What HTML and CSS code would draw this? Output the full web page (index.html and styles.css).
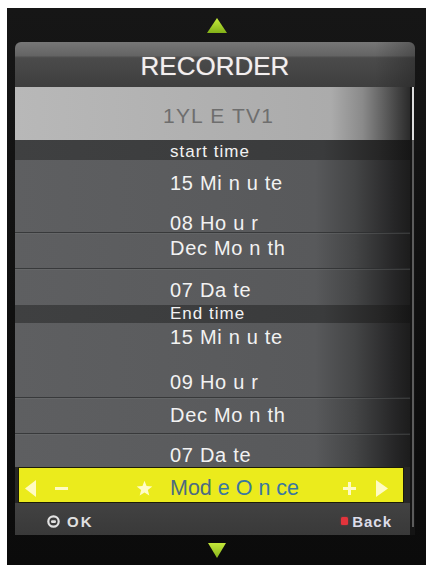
FILE: index.html
```html
<!DOCTYPE html>
<html>
<head>
<meta charset="utf-8">
<title>Recorder</title>
<link rel="stylesheet" href="styles.css">
</head>
<body>
<div class="screen">
  <div class="nav nav-up">
    <svg width="20" height="15" viewBox="0 0 20 15"><defs><linearGradient id="gu" x1="0" y1="0" x2="0" y2="1"><stop offset="0" stop-color="#c8ee3c"/><stop offset="1" stop-color="#82b018"/></linearGradient></defs><polygon points="10,0 20,15 0,15" fill="url(#gu)"/></svg>
  </div>
  <div class="panel">
    <div class="header">RECORDER</div>
    <div class="main">
      <div class="col">
        <div class="row channel">1YL E TV1</div>
        <div class="band band-start">start time</div>
        <div class="row r-min1">15 Mi n u te</div>
        <div class="row r-hour1">08 Ho u r</div>
        <div class="row sep r-month1">Dec Mo n th</div>
        <div class="row sep r-date1">07 Da te</div>
        <div class="band band-end">End time</div>
        <div class="row r-min2">15 Mi n u te</div>
        <div class="row r-hour2">09 Ho u r</div>
        <div class="row sep r-month2">Dec Mo n th</div>
        <div class="row sep r-date2">07 Da te</div>
        <div class="mode-wrap">
          <div class="mode">
            <svg class="m-left" width="11" height="17" viewBox="0 0 11 17"><polygon points="11,0 11,17 0,8.5" fill="#fffbc2"/></svg>
            <svg class="m-minus" width="13" height="3" viewBox="0 0 13 3"><rect width="13" height="3" fill="#fffbc2"/></svg>
            <svg class="m-star" width="17" height="17" viewBox="0 0 24 24"><polygon points="12,1 14.9,8.6 23,9 16.7,14.1 18.8,22 12,17.5 5.2,22 7.3,14.1 1,9 9.1,8.6" fill="#fffcc8"/></svg>
            <span class="m-text"><span class="m-a">Mod</span> <span class="m-b">e O n ce</span></span>
            <svg class="m-plus" width="13" height="13" viewBox="0 0 13 13"><rect x="5" y="0" width="3" height="13" fill="#fffbc2"/><rect x="0" y="5" width="13" height="3" fill="#fffbc2"/></svg>
            <svg class="m-right" width="12" height="17" viewBox="0 0 12 17"><polygon points="0,0 12,8.5 0,17" fill="#fffbc2"/></svg>
          </div>
        </div>
        <div class="footer">
          <span class="f-ok">
            <svg width="13" height="13" viewBox="0 0 13 13"><circle cx="6.5" cy="6.5" r="5.2" fill="none" stroke="#e2e2e2" stroke-width="2.2"/><rect x="4" y="5.3" width="5" height="2.6" rx="1.2" fill="#e2e2e2"/></svg>
            <span class="f-label">OK</span>
          </span>
          <span class="f-back">
            <span class="red-key"></span>
            <span class="f-label back">Back</span>
          </span>
        </div>
      </div>
      <div class="scroll"><div class="track"></div></div>
    </div>
  </div>
  <div class="nav nav-down">
    <svg width="18" height="15" viewBox="0 0 18 15"><defs><linearGradient id="gd" x1="0" y1="0" x2="0" y2="1"><stop offset="0" stop-color="#c4e83a"/><stop offset="1" stop-color="#88b41c"/></linearGradient></defs><polygon points="0,0 18,0 9,15" fill="url(#gd)"/></svg>
  </div>
</div>
</body>
</html>
```

FILE: styles.css
```css
html, body {
  margin: 0;
  background: #ffffff;
}

body {
  font-family: "Liberation Sans", Arial, sans-serif;
}

.screen {
  margin: 8px 0 0 7px;
  width: 419px;
  height: 557px;
  box-sizing: border-box;
  padding-left: 8px;
  background: linear-gradient(to bottom, #161616, #0b0b0b);
  overflow: hidden;
}

.nav {
  width: 400px;
  box-sizing: border-box;
  padding-left: 4px;
  display: flex;
  justify-content: center;
}

.nav svg {
  display: block;
}

.nav-up {
  height: 34px;
  padding-top: 10px;
}

.nav-down {
  padding-top: 8px;
}

.panel {
  width: 400px;
}

.header {
  height: 45px;
  box-sizing: border-box;
  padding-top: 11px;
  text-align: center;
  font-size: 26px;
  line-height: 1;
  color: #f3efef;
  text-shadow: 0 0 1px rgba(255, 255, 255, 0.5);
  border-radius: 6px 6px 0 0;
  background:
    linear-gradient(to right, rgba(0,0,0,0) 90%, rgba(0,0,0,0.25) 100%),
    linear-gradient(to bottom, #777777 0%, #646464 30%, #4b4b4b 35%, #3e3e3e 100%);
}

.main {
  display: flex;
}

.col {
  width: 395px;
}

.scroll {
  width: 5px;
  background: #141414;
  display: flex;
  justify-content: center;
}

.track {
  width: 2px;
  background: linear-gradient(to bottom, #dcdcdc 0, #dcdcdc 53px, #5c5c5c 53px, #5c5c5c 440px, #141414 440px);
}

.row {
  box-sizing: border-box;
  padding-left: 155px;
  font-size: 20px;
  line-height: 1;
  letter-spacing: 0.7px;
  color: #f2f2f2;
  white-space: pre;
  background: linear-gradient(to right, #5e5f61 0%, #58595b 76%, #444546 86%, #262627 96%, #1c1c1c 100%);
}

.row.sep {
  border-top: 1px solid rgba(44, 45, 47, 0.75);
  box-shadow: inset 0 1px 0 rgba(120, 121, 123, 0.3);
}

.channel {
  height: 53px;
  padding: 18px 0 0 148px;
  font-size: 21px;
  letter-spacing: 1.2px;
  color: #6e6e6e;
  background: linear-gradient(to right, #b8b8b8 0%, #ababab 80%, #8a8a8a 88%, #4a4a4a 96%, #2a2a2a 100%);
}

.band {
  box-sizing: border-box;
  padding-left: 155px;
  font-size: 17px;
  line-height: 1;
  letter-spacing: 1px;
  color: #f2f2f2;
  background: linear-gradient(to right, #3f4041 0%, #3a3b3c 78%, #262626 92%, #161616 100%);
}

.band-start {
  height: 20px;
  padding-top: 3px;
}

.band-end {
  height: 18px;
  padding-top: 0;
}

.r-min1 { height: 36px; padding-top: 13px; }
.r-hour1 { height: 36px; padding-top: 17px; }
.r-month1 { height: 36px; padding-top: 5px; }
.r-date1 { height: 37px; padding-top: 11px; }
.r-min2 { height: 37px; padding-top: 4px; }
.r-hour2 { height: 37px; padding-top: 12px; }
.r-month2 { height: 36px; padding-top: 7px; }
.r-date2 { height: 34px; padding-top: 11px; }

.mode-wrap {
  height: 36px;
  box-sizing: border-box;
  padding: 0 6px 0 3px;
  background: #262626;
}

.mode {
  height: 36px;
  box-sizing: border-box;
  border: 1px solid #1c1c08;
  padding: 7px 15px 0 0;
  background: #ebeb1c;
  display: flex;
  align-items: center;
}

.mode svg {
  display: block;
  flex: none;
}

.m-left { margin-left: 6px; }
.m-minus { margin-left: 19px; }
.m-star { margin-left: 68px; }

.m-text {
  margin-left: 17px;
  font-size: 21.5px;
  line-height: 1;
  white-space: pre;
}

.m-a { color: #4c6b80; }
.m-b { color: #3a77a0; }

.m-plus { margin-left: auto; }
.m-right { margin-left: 20px; }

.footer {
  height: 32px;
  box-sizing: border-box;
  padding: 4px 18px 0 32px;
  display: flex;
  align-items: center;
  justify-content: space-between;
  background: linear-gradient(to bottom, #424242, #393939);
  font-weight: bold;
  font-size: 15px;
  line-height: 1;
  color: #e0e0e0;
}

.f-ok, .f-back {
  display: flex;
  align-items: center;
}

.f-ok svg {
  display: block;
  margin-right: 7px;
}

.f-label {
  letter-spacing: 2px;
}

.f-label.back {
  letter-spacing: 1px;
  color: #dcdce8;
}

.red-key {
  width: 7px;
  height: 8px;
  margin-right: 4px;
  border-radius: 1.5px;
  background: #e3343c;
  box-shadow: 0 0 2px rgba(230, 50, 60, 0.6);
}
```
